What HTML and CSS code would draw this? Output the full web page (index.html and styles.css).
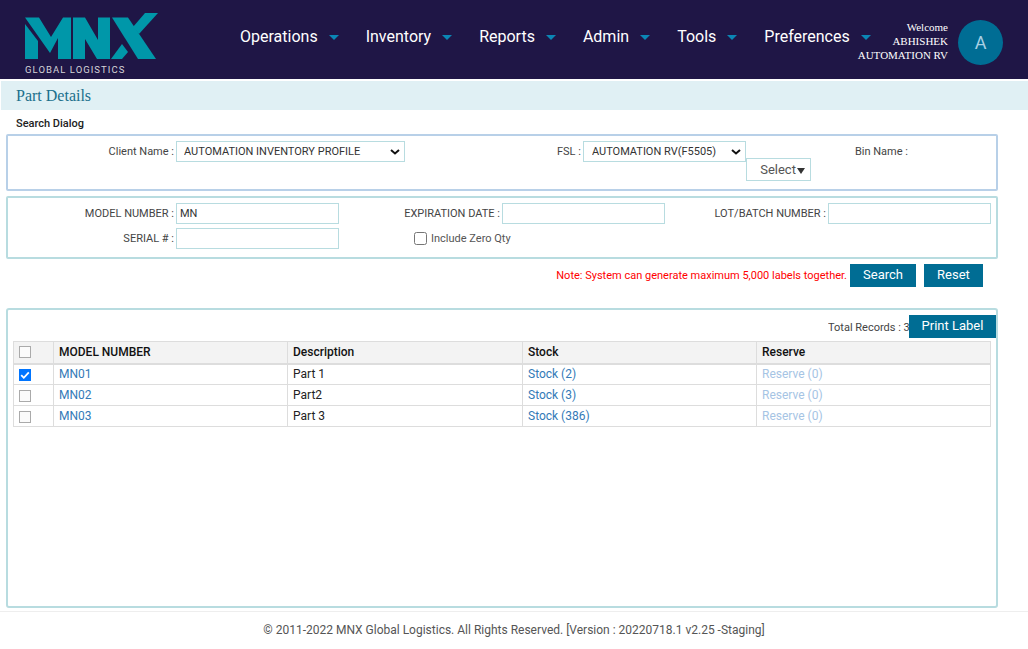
FILE: index.html
```html
<!DOCTYPE html>
<html lang="en">
<head>
<meta charset="utf-8">
<title>Part Details</title>
<link rel="stylesheet" href="styles.css">
</head>
<body>
<header class="topbar">
  <div class="logo">
    <svg class="logo-mark" width="134" height="48" viewBox="0 0 134 48" aria-hidden="true">
      <path fill="#0097a9" d="M0 4.5H14L26 24L38 4.5H46V46H33V25L25 40Z"/>
      <path fill="#0097a9" d="M0 11L13 28V46H0Z"/>
      <path fill="#0097a9" d="M48 4.5H60L73 27V4.5H85V46H72L60 26V46H48Z"/>
      <path fill="#0097a9" d="M87 4.5H103L131 46H113Z"/>
      <path fill="#0097a9" d="M120 0H133L114 21L108 14Z"/>
      <path fill="#0097a9" d="M86 46L97 31L103 39L97 46Z"/>
    </svg>
    <span class="logo-text">GLOBAL LOGISTICS</span>
  </div>
  <nav class="nav">
    <a class="nav-item">Operations<i class="caret"></i></a>
    <a class="nav-item">Inventory<i class="caret"></i></a>
    <a class="nav-item">Reports<i class="caret"></i></a>
    <a class="nav-item">Admin<i class="caret"></i></a>
    <a class="nav-item">Tools<i class="caret"></i></a>
    <a class="nav-item">Preferences<i class="caret"></i></a>
  </nav>
  <div class="user">
    <div class="welcome">Welcome<br>ABHISHEK<br>AUTOMATION RV</div>
    <div class="avatar">A</div>
  </div>
</header>

<h1 class="page-title">Part Details</h1>
<div class="dialog-title">Search Dialog</div>

<section class="panel panel-blue filters-top">
  <div class="field field-client">
    <label>Client Name :</label>
    <select class="sel sel-client"><option>AUTOMATION INVENTORY PROFILE</option></select>
  </div>
  <div class="field field-fsl">
    <label>FSL :</label>
    <div class="fsl-stack">
      <select class="sel sel-fsl"><option>AUTOMATION RV(F5505)</option></select>
      <div class="select-btn">Select<i class="select-caret"></i></div>
    </div>
  </div>
  <div class="field field-bin"><label>Bin Name :</label></div>
</section>

<section class="panel panel-teal filters-grid">
  <label class="lbl">MODEL NUMBER :</label><input class="txt" value="MN">
  <label class="lbl">EXPIRATION DATE :</label><input class="txt">
  <label class="lbl">LOT/BATCH NUMBER :</label><input class="txt">
  <label class="lbl">SERIAL # :</label><input class="txt">
  <label class="zero"><input type="checkbox" class="zero-box">Include Zero Qty</label>
</section>

<div class="actions">
  <span class="note">Note: System can generate maximum 5,000 labels together.</span>
  <button class="btn btn-search">Search</button>
  <button class="btn btn-reset">Reset</button>
</div>

<section class="panel panel-teal results">
  <div class="results-head">
    <span class="total">Total Records : 3</span>
    <button class="btn btn-print">Print Label</button>
  </div>
  <table class="grid">
    <colgroup><col class="c0"><col class="c1"><col class="c2"><col class="c3"><col class="c4"></colgroup>
    <thead>
      <tr><th class="chk"><input type="checkbox" class="box"></th><th>MODEL NUMBER</th><th>Description</th><th>Stock</th><th>Reserve</th></tr>
    </thead>
    <tbody>
      <tr><td class="chk"><input type="checkbox" class="box" checked></td><td><a class="lnk">MN01</a></td><td>Part 1</td><td><a class="lnk">Stock (2)</a></td><td><a class="lnk-off">Reserve (0)</a></td></tr>
      <tr><td class="chk"><input type="checkbox" class="box"></td><td><a class="lnk">MN02</a></td><td>Part2</td><td><a class="lnk">Stock (3)</a></td><td><a class="lnk-off">Reserve (0)</a></td></tr>
      <tr><td class="chk"><input type="checkbox" class="box"></td><td><a class="lnk">MN03</a></td><td>Part 3</td><td><a class="lnk">Stock (386)</a></td><td><a class="lnk-off">Reserve (0)</a></td></tr>
    </tbody>
  </table>
</section>

<footer class="footer">© 2011-2022 MNX Global Logistics. All Rights Reserved. [Version : 20220718.1 v2.25 -Staging]</footer>
</body>
</html>
```

FILE: styles.css
```css
* { box-sizing: border-box; }
html, body { margin: 0; padding: 0; }
body { width: 1028px; height: 649px; overflow: hidden; background: #fff; font-family: Roboto, "Liberation Sans", sans-serif; font-size: 12px; color: #333; }

.topbar { height: 79px; background: #1f1646; display: flex; align-items: flex-start; position: relative; }
.logo { width: 240px; padding: 13px 0 0 25px; flex: none; display: flex; flex-direction: column; }
.logo-mark { display: block; }
.logo-text { color: #d4d4d8; font-size: 9.5px; letter-spacing: 1.05px; line-height: 12px; margin-top: 3px; white-space: nowrap; }
.nav { display: flex; padding-top: 27px; flex: none; }
.nav-item { color: #fff; font-size: 16px; line-height: 19px; font-weight: 400; display: flex; align-items: center; margin-right: 27px; white-space: nowrap; }
.caret { width: 0; height: 0; border-left: 5px solid transparent; border-right: 5px solid transparent; border-top: 5px solid #0b86b5; margin-left: 11px; margin-top: 2px; }
.user { position: absolute; right: 25px; top: 20px; display: flex; gap: 10px; align-items: flex-start; }
.welcome { font-family: "Liberation Serif", serif; font-size: 11px; line-height: 14px; color: #fff; text-align: right; font-weight: 400; }
.avatar { width: 45px; height: 45px; border-radius: 50%; background: #006d94; color: #a9d0e4; font-size: 18px; display: flex; align-items: center; justify-content: center; }

.page-title { margin: 2px 0 0 1px; height: 29px; background: #e0f0f4; color: #1a6f8c; font-family: "Liberation Serif", serif; font-weight: 400; font-size: 16px; line-height: 29px; padding-left: 15px; }
.dialog-title { margin: 7px 0 0 16px; font-size: 11px; line-height: 13px; font-weight: 500; color: #222; height: 17px; }

.panel { margin: 0 30px 0 6px; border: 2px solid; border-radius: 2px; }
.panel-blue { border-color: #b8d0e8; }
.panel-teal { border-color: #b8dce0; }

.filters-top { height: 57px; display: flex; align-items: flex-start; padding-top: 5px; }
.field { display: flex; align-items: flex-start; }
.field label { font-size: 11px; line-height: 21px; color: #444; white-space: nowrap; }
.field-client { width: 397px; justify-content: flex-end; gap: 2px; }
.field-fsl { margin-left: 152px; gap: 2px; }
.fsl-stack { display: flex; flex-direction: column; align-items: flex-start; width: 228px; }
.field-bin { margin-left: 44px; }
.sel { height: 21px; border: 1px solid #b8dce0; font-family: inherit; font-size: 11px; color: #333; padding: 0 4px; border-radius: 0; appearance: none; background: #fff url("data:image/svg+xml,%3Csvg xmlns='http://www.w3.org/2000/svg' width='10' height='6'%3E%3Cpath d='M1 1l4 3.5L9 1' fill='none' stroke='%23111' stroke-width='2'/%3E%3C/svg%3E") no-repeat right 4px center; }
.sel-client { width: 229px; padding-left: 7px; }
.sel-fsl { width: 163px; padding-left: 8px; }
.select-btn { margin-left: 163px; margin-top: -4px; width: 65px; height: 23px; border: 1px solid #b8dce0; color: #555; font-size: 13px; line-height: 20px; display: flex; align-items: center; justify-content: flex-end; padding-right: 5px; }
.select-caret { width: 0; height: 0; border-left: 4px solid transparent; border-right: 4px solid transparent; border-top: 6px solid #333; margin-left: 1px; margin-top: 2px; }

.filters-grid { margin-top: 5px; height: 63px; padding: 5px 0 0 0; display: grid; grid-template-columns: 168px 163px 163px 163px 163px 163px; grid-template-rows: 21px 21px; row-gap: 4px; }
.lbl { font-size: 11px; line-height: 21px; color: #444; text-align: right; padding-right: 2px; white-space: nowrap; }
.txt { width: 163px; height: 21px; border: 1px solid #b8dce0; font-family: inherit; font-size: 11px; color: #333; padding: 0 3px; background: #fff; border-radius: 0; outline: none; }
.zero { grid-column: 3 / span 3; font-size: 11px; line-height: 21px; color: #555; display: flex; align-items: center; padding-left: 75px; }
.zero-box { margin: 0 4px 0 0; width: 13px; height: 13px; }

.actions { display: flex; align-items: flex-start; justify-content: flex-end; padding: 5px 45px 0 0; height: 49px; }
.note { color: #f00; font-size: 11px; line-height: 23px; margin-right: 3px; font-weight: 400; white-space: nowrap; }
.btn { background: #006d94; color: #fff; border: 0; border-radius: 0; font-family: inherit; font-size: 13px; height: 23px; padding: 0 0 2px; }
.btn-search { width: 66px; margin-right: 8px; }
.btn-reset { width: 59px; }

.results { height: 300px; padding: 0 5px; border-radius: 3px; }
.results-head { height: 32px; margin-bottom: -1px; margin-right: -5px; display: flex; justify-content: flex-end; align-items: flex-start; padding-top: 5px; }
.total { font-size: 11px; line-height: 25px; color: #444; white-space: nowrap; width: 81px; overflow: hidden; }
.btn-print { width: 87px; }

.grid { border-collapse: collapse; table-layout: fixed; width: 977px; font-size: 12px; }
.c0 { width: 40px; } .c1 { width: 234px; } .c2 { width: 235px; } .c3 { width: 234px; } .c4 { width: 234px; }
.grid th, .grid td { border: 1px solid #ddd; padding: 0 5px; height: 21px; text-align: left; white-space: nowrap; }
.grid th { background: #f3f3f3; color: #111; font-weight: 500; height: 22px; border-bottom: 2px solid #ddd; }
.grid td { color: #222; }
.grid .chk { padding: 0 0 0 5px; }
.grid td.chk { padding-top: 2px; }
.box { appearance: none; display: block; margin: 0; width: 12px; height: 12px; border: 1px solid #aaa; background: #fbfbfb; }
.box:checked { border: 0; background: #0075ff url("data:image/svg+xml,%3Csvg xmlns='http://www.w3.org/2000/svg' width='12' height='12'%3E%3Cpath d='M2.2 6.2l2.6 2.6 5-5.4' fill='none' stroke='%23fff' stroke-width='1.8'/%3E%3C/svg%3E") no-repeat center; }
.lnk { color: #337ab7; }
.lnk-off { color: #a6c4e4; }

.footer { margin-top: 3px; border-top: 1px solid #eee; height: 38px; text-align: center; font-size: 12px; line-height: 36px; color: #555; }
```
